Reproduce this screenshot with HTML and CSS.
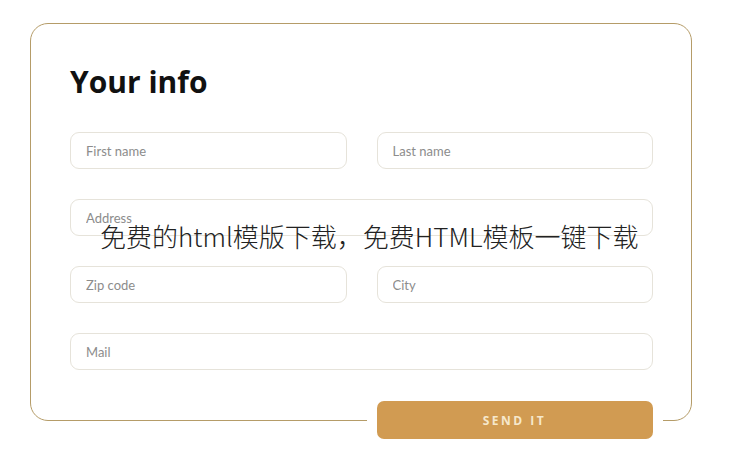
FILE: index.html
```html
<!DOCTYPE html>
<html lang="en">
<head>
    <meta charset="UTF-8">
    <meta name="viewport" content="width=device-width, initial-scale=1.0">
    <title>Your info</title>
    <link rel="stylesheet" href="styles.css">
</head>
<body>
    <div class="page">
        <form class="info-card">
            <h1>Your info</h1>
            <div class="fields">
                <input type="text" class="field" placeholder="First name">
                <input type="text" class="field" placeholder="Last name">
                <input type="text" class="field wide" placeholder="Address">
                <input type="text" class="field" placeholder="Zip code">
                <input type="text" class="field" placeholder="City">
                <input type="text" class="field wide" placeholder="Mail">
            </div>
        </form>
        <div class="form-footer">
            <button type="button" class="send-button">SEND IT</button>
        </div>
        <div class="watermark">免费的html模版下载，免费HTML模板一键下载</div>
    </div>
</body>
</html>
```

FILE: styles.css
```css
* {
    margin: 0;
    padding: 0;
    box-sizing: border-box;
}

body {
    font-family: Lato, 'Open Sans', sans-serif;
    background: #fff;
}

.page {
    position: relative;
    min-height: 456px;
    padding: 23px 43px 0 30px;
}

.info-card {
    border: 1.5px solid #b59c68;
    border-radius: 18px;
    padding: 38px 38px 50px 39px;
}

.info-card h1 {
    font-family: 'Open Sans', Lato, sans-serif;
    font-size: 30px;
    font-weight: 700;
    color: #111;
    line-height: 40px;
    margin-bottom: 30px;
}

.fields {
    display: grid;
    grid-template-columns: 1fr 1fr;
    gap: 30px;
}

.field {
    height: 37px;
    padding: 0 15px;
    border: 1.5px solid #e6e3da;
    border-radius: 9px;
    font-family: Lato, sans-serif;
    font-size: 13px;
    color: #333;
    outline: none;
    background: #fff;
}

.field::placeholder {
    color: #8c8c8c;
}

.field.wide {
    grid-column: 1 / 3;
}

.form-footer {
    display: grid;
    grid-template-columns: 1fr 1fr;
    column-gap: 30px;
    padding: 0 39.5px 0 40.5px;
    margin-top: -20px;
}

.send-button {
    grid-column: 2;
    height: 38px;
    background: #d19b52;
    border: none;
    border-radius: 7px;
    box-shadow: 0 0 0 10px #fff;
    color: #f6e8cc;
    font-family: 'Open Sans', sans-serif;
    font-size: 12px;
    font-weight: 700;
    letter-spacing: 2.5px;
    cursor: pointer;
}

.watermark {
    position: absolute;
    left: 100px;
    top: 217px;
    font-family: 'Noto Sans CJK SC', sans-serif;
    font-size: 26px;
    font-weight: 300;
    color: #222;
    white-space: nowrap;
}
```
